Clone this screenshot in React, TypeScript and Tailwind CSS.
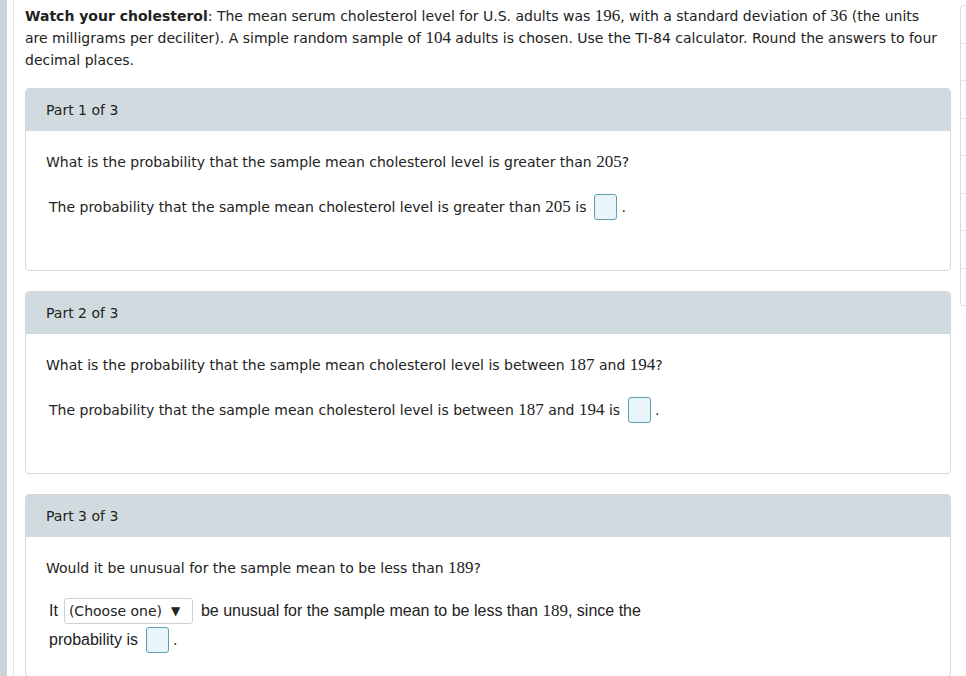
import React from "react";

const N = ({ children }: { children: React.ReactNode }) => (
  <span className="font-[family-name:'Liberation_Serif',serif] text-[17px] leading-[1]">{children}</span>
);

const Box = () => (
  <span className="inline-block align-middle w-[23px] h-[26px] rounded-[3px] border border-[#5d9fae] bg-[#e9f5f9] ml-[8px] mr-[4px]" />
);

const Card = ({ title, children }: { title: string; children: React.ReactNode }) => (
  <div className="rounded-[4px] border border-[#d6d9db] overflow-hidden bg-white">
    <div className="h-[42px] bg-[#d1dadf] flex items-center pl-[20px] text-[14px] text-[#222]">{title}</div>
    <div className="h-[139px] pl-[20px] pt-[20px]">{children}</div>
  </div>
);

export default function App() {
  return (
    <div className="relative w-[966px] h-[676px] bg-white overflow-hidden font-[family-name:'DejaVu_Sans',Verdana,sans-serif] text-[#222]">
      <div className="absolute left-0 top-0 w-[7px] h-full bg-[#c9d3d8]" />
      <div className="absolute left-[13px] top-0 w-[1px] h-full bg-[#e4e6e7]" />
      <div className="absolute left-[960px] top-[5px] w-[20px] h-[301px] border border-[#dcdcdc] rounded-[3px] flex flex-col">
        {[0, 1, 2, 3, 4, 5, 6, 7].map((i) => (
          <div key={i} className="flex-1 border-b border-[#e6e6e6] last:border-b-0" />
        ))}
      </div>
      <div className="pl-[25px] pr-[16px] w-[966px]">
        <p className="pt-[5px] text-[14px] leading-[22px] pr-[4px]">
          <b>Watch your cholesterol</b>: The mean serum cholesterol level for U.S. adults was <N>196</N>, with a standard
          deviation of <N>36</N> (the units are milligrams per deciliter). A simple random sample of <N>104</N> adults is
          chosen. Use the TI-84 calculator. Round the answers to four decimal places.
        </p>
        <div className="mt-[17px] flex flex-col gap-[20px] w-[926px]">
          <Card title="Part 1 of 3">
            <div className="text-[14px] leading-[22px]">
              What is the probability that the sample mean cholesterol level is greater than <N>205</N>?
            </div>
            <div className="mt-[21px] ml-[3px] text-[14px] flex items-center">
              <span>
                The probability that the sample mean cholesterol level is greater than <N>205</N> is
              </span>
              <Box />
              <span>.</span>
            </div>
          </Card>
          <Card title="Part 2 of 3">
            <div className="text-[14px] leading-[22px]">
              What is the probability that the sample mean cholesterol level is between <N>187</N> and <N>194</N>?
            </div>
            <div className="mt-[21px] ml-[3px] text-[14px] flex items-center">
              <span>
                The probability that the sample mean cholesterol level is between <N>187</N> and <N>194</N> is
              </span>
              <Box />
              <span>.</span>
            </div>
          </Card>
          <Card title="Part 3 of 3">
            <div className="text-[14px] leading-[22px]">
              Would it be unusual for the sample mean to be less than <N>189</N>?
            </div>
            <div className="mt-[18px] ml-[3px] font-[family-name:'Liberation_Sans',Arial,sans-serif] text-[16px]">
              <div className="flex items-center h-[28px]">
                <span>It</span>
                <span className="ml-[6px] h-[26px] w-[129px] border border-[#d0d0d0] rounded-[3px] flex items-center pl-[4px] font-[family-name:'DejaVu_Sans',sans-serif] text-[14px]">
                  (Choose one)
                  <span className="ml-[9px] text-[12px]">▼</span>
                </span>
                <span className="ml-[8px]">
                  be unusual for the sample mean to be less than <N>189</N>, since the
                </span>
              </div>
              <div className="flex items-center mt-[2px]">
                <span>probability is</span>
                <Box />
                <span>.</span>
              </div>
            </div>
          </Card>
        </div>
      </div>
    </div>
  );
}
